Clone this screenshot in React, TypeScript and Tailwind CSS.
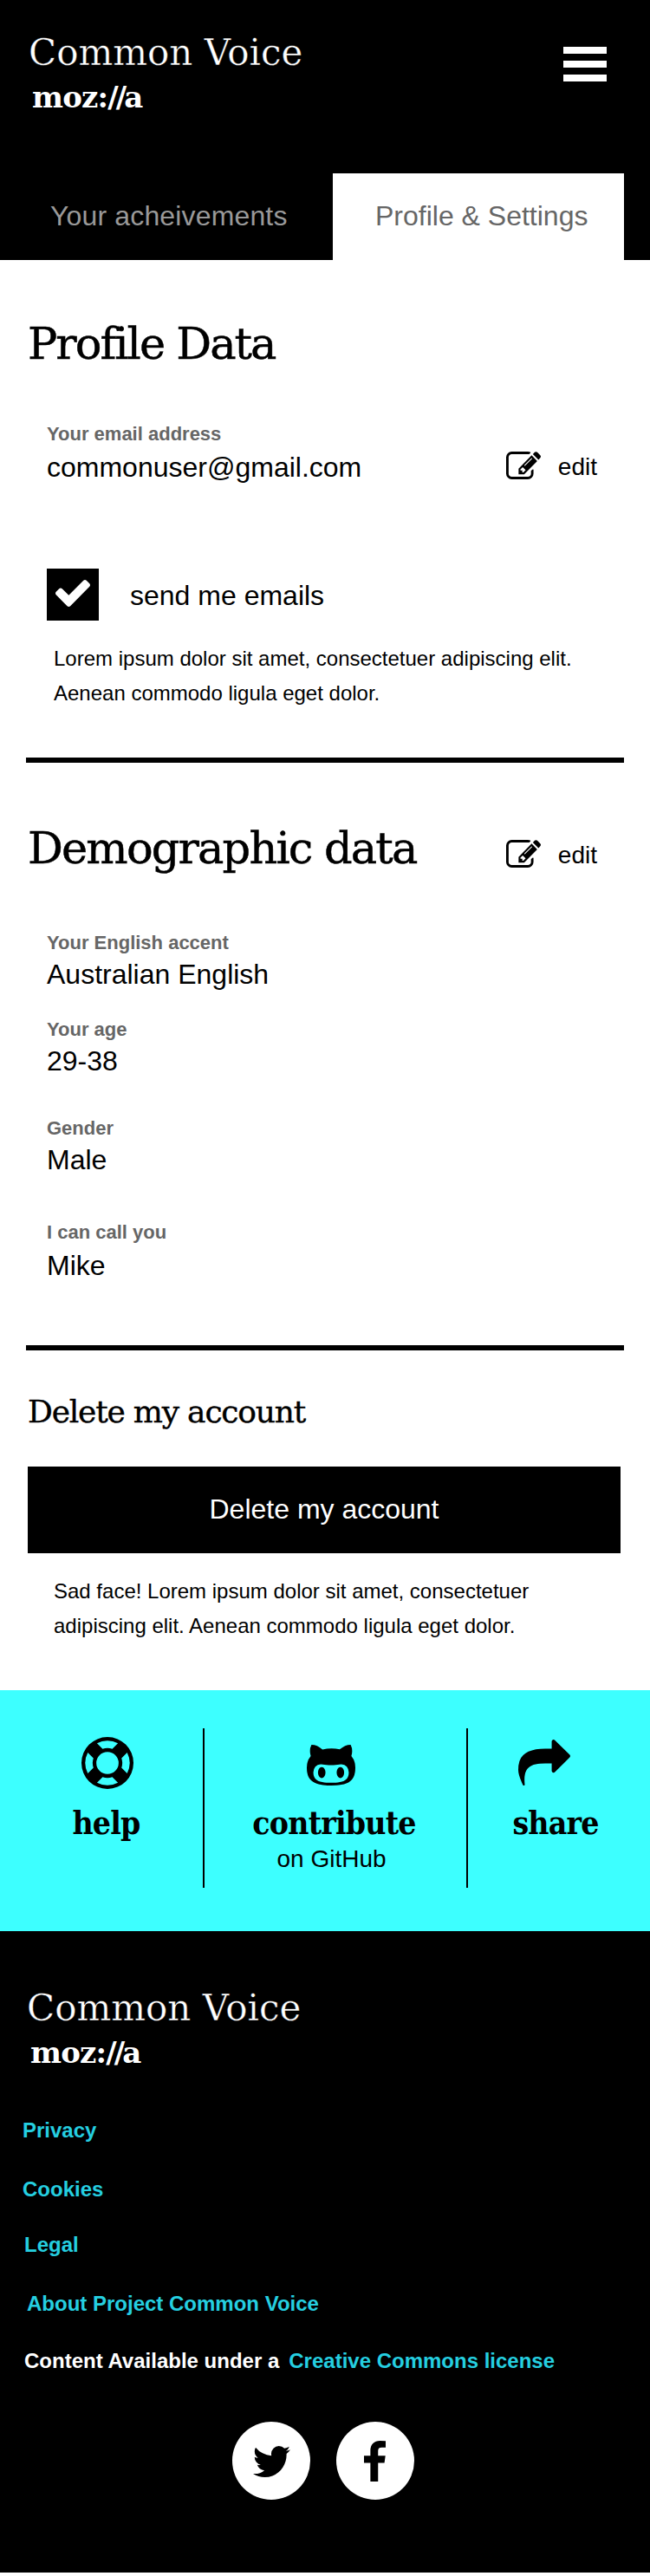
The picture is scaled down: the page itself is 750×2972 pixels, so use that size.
import type { ReactNode } from "react";

const SLAB = "font-['DejaVu_Serif',serif]";
const SLAB_NARROW = "font-['DejaVu_Serif_Condensed','DejaVu_Serif',serif] [font-stretch:condensed]";

function Glyph({ box, d, className }: { box: string; d: string; className: string }) {
  return (
    <svg viewBox={box} preserveAspectRatio="none" fill="currentColor" className={`block shrink-0 ${className}`} aria-hidden="true">
      <path d={d} />
    </svg>
  );
}

const ICONS = {
  edit: "M888 1184l116-116-152-152-116 116v56h96v96h56zm440-720q-16-16-33 1l-350 350q-17 17-1 33t33-1l350-350q17-17 1-33zm80 594v190q0 119-84.5 203.5t-203.5 84.5h-832q-119 0-203.5-84.5t-84.5-203.5v-832q0-119 84.5-203.5t203.5-84.5h832q63 0 117 25 15 7 18 23 3 17-9 29l-49 49q-14 14-32 8-23-6-45-6h-832q-66 0-113 47t-47 113v832q0 66 47 113t113 47h832q66 0 113-47t47-113v-126q0-13 9-22l64-64q15-15 35-7t20 29zm-96-738l288 288-672 672h-288v-288zm444 132l-92 92-288-288 92-92q28-28 68-28t68 28l152 152q28 28 28 68t-28 68z",
  check: "M1671 566q0 40-28 68l-724 724-136 136q-28 28-68 28t-68-28l-136-136-362-362q-28-28-28-68t28-68l136-136q28-28 68-28t68 28l294 295 656-657q28-28 68-28t68 28l136 136q28 28 28 68z",
  ring: "M896 0q182 0 348 71t286 191 191 286 71 348-71 348-191 286-286 191-348 71-348-71-286-191-191-286-71-348 71-348 191-286 286-191 348-71zm0 128q-190 0-361 90l194 194q82-28 167-28t167 28l194-194q-171-90-361-90zm-678 1129l194-194q-28-82-28-167t28-167l-194-194q-90 171-90 361t90 361zm678 407q190 0 361-90l-194-194q-82 28-167 28t-167-28l-194 194q171 90 361 90zm0-384q159 0 271.5-112.5t112.5-271.5-112.5-271.5-271.5-112.5-271.5 112.5-112.5 271.5 112.5 271.5 271.5 112.5zm484-217l194 194q90-171 90-361t-90-361l-194 194q28 82 28 167t-28 167z",
  github: "M704 1216q0 40-12.5 82t-43 76-72.5 34-72.5-34-43-76-12.5-82 12.5-82 43-76 72.5-34 72.5 34 43 76 12.5 82zm640 0q0 40-12.5 82t-43 76-72.5 34-72.5-34-43-76-12.5-82 12.5-82 43-76 72.5-34 72.5 34 43 76 12.5 82zm160 0q0-120-69-204t-187-84q-41 0-195 21-71 11-157 11t-157-11q-152-21-195-21-118 0-187 84t-69 204q0 88 32 153.5t81 103 122 60 140 29.5 149 7h168q82 0 149-7t140-29.5 122-60 81-103 32-153.5zm224-176q0 207-61 331-38 77-105.5 133t-141 86-170 47.5-171.5 22-167 4.5q-78 0-142-3t-147.5-12.5-152.5-30-137-51.5-121-81-86-115q-62-123-62-331 0-237 136-396-27-82-27-170 0-116 51-218 108 0 190 39.5t189 123.5q147-35 309-35 148 0 280 32 105-82 187-121t189-39q51 102 51 218 0 87-27 168 136 160 136 398z",
  share: "M1792 640q0 26-19 45l-512 512q-19 19-45 19t-45-19-19-45v-256h-224q-98 0-175.5 6t-154 21.5-133 42.5-105.5 69.5-80 101-48.5 138.5-17.5 181q0 55 5 123 0 6 2.5 23.5t2.5 26.5q0 15-8.5 25t-23.5 10q-16 0-28-17-7-9-13-22t-13.5-30-10.5-24q-127-285-127-451 0-199 53-333 162-403 875-403h224v-256q0-26 19-45t45-19 45 19l512 512q19 19 19 45z",
  twitter: "M1684 408q-67 98-162 167 1 14 1 42 0 130-38 259.5t-115.5 248.5-184.5 210.5-258 146-323 54.5q-271 0-496-145 35 4 78 4 225 0 401-138-105-2-188-64.5t-114-159.5q33 5 61 5 43 0 85-11-112-23-185.5-111.5t-73.5-205.5v-4q68 38 146 41-66-44-105-115t-39-154q0-88 44-163 121 149 294.5 238.5t371.5 99.5q-8-38-8-74 0-134 94.5-228.5t228.5-94.5q140 0 236 102 109-21 205-78-37 115-142 178 93-10 186-50z",
  facebook: "M1343 12v264h-157q-86 0-116 36t-30 108v189h293l-39 296h-254v759h-306v-759h-255v-296h255v-218q0-186 104-288.5t277-102.5q147 0 228 12z",
};

function Logo({ className }: { className: string }) {
  return (
    <div className={`${SLAB} text-white ${className}`}>
      <div className="text-[42px] leading-[50px] whitespace-nowrap [-webkit-text-stroke:0.4px_#000]">Common Voice</div>
      <div className="mt-1.5 ml-1 text-[34px] leading-10 font-bold tracking-[-0.8px] whitespace-nowrap">
        moz:<span className="tracking-[-3px]">//</span>a
      </div>
    </div>
  );
}

function EditButton({ className }: { className: string }) {
  return (
    <button className={`flex items-start ${className}`}>
      <Glyph box="0 128 1784 1408" d={ICONS.edit} className="h-8 w-10" />
      <span className="ml-5 text-[28px] leading-9">edit</span>
    </button>
  );
}

function Field({ label, value, className, gap }: { label: string; value: string; className: string; gap: string }) {
  return (
    <div className={className}>
      <div className="pt-px text-[22px] leading-7 font-bold text-[#666]">{label}</div>
      <div className={`text-[32px] leading-10 ${gap}`}>{value}</div>
    </div>
  );
}

function Action({ icon, label, className, children }: { icon: ReactNode; label: string; className: string; children?: ReactNode }) {
  return (
    <a className={`flex h-[184px] flex-col items-center ${className}`}>
      <div className="h-[84px]">{icon}</div>
      <div className={`${SLAB_NARROW} text-[37px] leading-[50px] font-bold tracking-[-0.8px]`}>{label}</div>
      {children}
    </a>
  );
}

export default function App() {
  return (
    <div className="w-[750px] bg-white font-['Liberation_Sans',Arial,sans-serif] text-black">
      <header className="flex h-[300px] flex-col justify-between bg-black">
        <div className="flex justify-between pt-9 pr-[50px] pl-[33px]">
          <Logo className="" />
          <button className="mt-[18px] flex h-10 w-[50px] flex-col gap-2">
            <span className="h-2 w-full bg-white" />
            <span className="h-2 w-full bg-white" />
            <span className="h-2 w-full bg-white" />
          </button>
        </div>
        <nav className="flex h-[100px] pr-[30px] text-[32px] leading-10">
          <a className="flex w-[384px] items-center pb-0.5 pl-[58px] tracking-[0.15px] text-[#999]">Your acheivements</a>
          <a className="flex flex-1 items-center bg-white pb-0.5 pl-[49px] text-[#666]">Profile &amp; Settings</a>
        </nav>
      </header>

      <main className="h-[1650px] pr-[30px] pl-[30px]">
        <section className="pt-[67px]">
          <h1 className={`${SLAB} ml-0.5 text-[51px] leading-[60px] tracking-[-2px] [-webkit-text-stroke:0.5px_#000]`}>Profile Data</h1>
          <div className="mt-[59px] flex items-end justify-between pl-6">
            <Field label="Your email address" value="commonuser@gmail.com" className="" gap="mt-1" />
            <EditButton className="mr-[31px] mb-0.5" />
          </div>
          <label className="mt-[97px] flex items-center pl-6">
            <span className="flex h-[60px] w-[60px] items-center justify-center bg-black pb-[3px] text-white">
              <Glyph box="121 334 1550 1188" d={ICONS.check} className="h-[31px] w-10" />
            </span>
            <span className="ml-9 pt-0.5 text-[32px] leading-10">send me emails</span>
          </label>
          <p className="mt-6 pl-8 text-2xl leading-10">
            Lorem ipsum dolor sit amet, consectetuer adipiscing elit.
            <br />
            Aenean commodo ligula eget dolor.
          </p>
        </section>

        <div className="mt-[54px] h-1.5 bg-black" />

        <section className="pt-[69px]">
          <div className="flex items-start justify-between pl-0.5">
            <h1 className={`${SLAB} text-[51px] leading-[60px] tracking-[-1.85px] [-webkit-text-stroke:0.5px_#000]`}>Demographic data</h1>
            <EditButton className="mt-5 mr-[31px]" />
          </div>
          <div className="pl-6">
            <Field label="Your English accent" value="Australian English" className="mt-16" gap="mt-0.5" />
            <Field label="Your age" value="29-38" className="mt-[29px]" gap="mt-0.5" />
            <Field label="Gender" value="Male" className="mt-[43px]" gap="mt-0.5" />
            <Field label="I can call you" value="Mike" className="mt-[49px]" gap="mt-1" />
          </div>
        </section>

        <div className="mt-[72px] h-1.5 bg-black" />

        <section className="pt-[46px]">
          <h2 className={`${SLAB} ml-0.5 text-[36px] leading-[50px] tracking-[-1.2px] [-webkit-text-stroke:0.4px_#000]`}>Delete my account</h2>
          <button className="mt-[38px] mr-1 ml-0.5 flex h-[100px] w-[684px] items-center justify-center bg-black pb-0.5 text-[32px] leading-10 text-white">
            Delete my account
          </button>
          <p className="mt-6 pl-8 text-2xl leading-10">
            Sad face! Lorem ipsum dolor sit amet, consectetuer
            <br />
            adipiscing elit. Aenean commodo ligula eget dolor.
          </p>
        </section>
      </main>

      <section className="flex h-[278px] bg-[#3dffff] pt-11">
        <Action
          label="help"
          className="w-[234px] pl-[11px]"
          icon={<Glyph box="0 0 1792 1792" d={ICONS.ring} className="mt-2.5 ml-[3px] h-[60px] w-[60px]" />}
        />
        <div className="h-[184px] w-0.5 bg-black" />
        <Action
          label="contribute"
          className="w-[302px] pr-[3px]"
          icon={<Glyph box="64 256 1664 1408" d={ICONS.github} className="mt-[19px] mr-[7px] h-[47px] w-14" />}
        >
          <span className="-mt-px mr-1.5 text-[28px] leading-9">on GitHub</span>
        </Action>
        <div className="h-[184px] w-0.5 bg-black" />
        <Action
          label="share"
          className="w-[210px] pr-2"
          icon={<Glyph box="0 64 1792 1600" d={ICONS.share} className="mt-[13px] mr-[26px] h-[53px] w-[60px]" />}
        />
      </section>

      <footer className="h-[740px] bg-black pt-16 text-2xl leading-7 font-bold text-[#25cfe0]">
        <Logo className="ml-[31px] font-normal" />
        <a className="mt-14 ml-[26px] block">Privacy</a>
        <a className="mt-10 ml-[26px] block">Cookies</a>
        <a className="mt-9 ml-7 block">Legal</a>
        <a className="mt-10 ml-[31px] block">About Project Common Voice</a>
        <div className="mt-[38px] ml-7 flex gap-[11px]">
          <span className="text-white">Content Available under a</span>
          <a>Creative Commons license</a>
        </div>
        <div className="mt-14 flex gap-[30px] pl-[268px] text-black">
          <a className="flex h-[90px] w-[90px] items-center justify-center rounded-full bg-white pt-0.5">
            <Glyph box="108 256 1576 1280" d={ICONS.twitter} className="h-9 w-[43px]" />
          </a>
          <a className="flex h-[90px] w-[90px] items-center justify-center rounded-full bg-white pr-0.5">
            <Glyph box="479 0 864 1664" d={ICONS.facebook} className="h-[47px] w-[25px]" />
          </a>
        </div>
      </footer>
    </div>
  );
}
